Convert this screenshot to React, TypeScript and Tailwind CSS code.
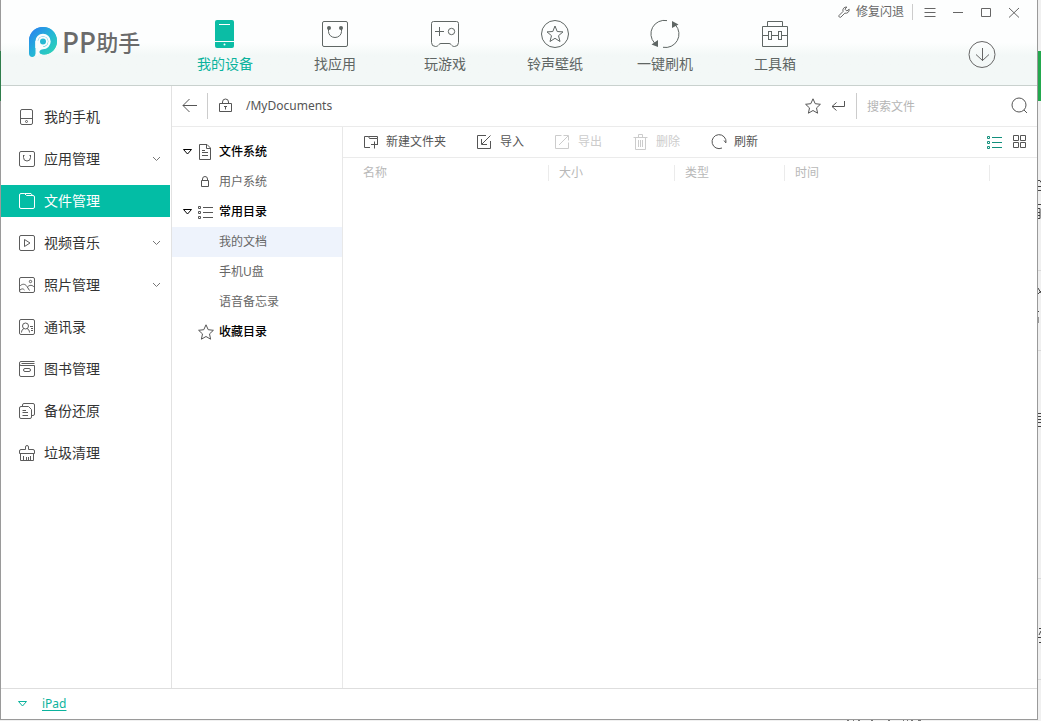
import type { ReactNode } from 'react';

type DrawProps = { w: number; h: number; children: ReactNode; className?: string };

function Draw({ w, h, children, className = '' }: DrawProps) {
  return (
    <svg
      width={w}
      height={h}
      viewBox={`0 0 ${w} ${h}`}
      fill="none"
      stroke="currentColor"
      strokeWidth="1"
      aria-hidden="true"
      className={`shrink-0 ${className}`}
    >
      {children}
    </svg>
  );
}

const star16 = 'M8 .8l2.2 4.9 5.2.6-3.9 3.6 1.1 5.3L8 12.5l-4.6 2.7 1.1-5.3L.6 6.3l5.2-.6z';

function Logo() {
  return (
    <svg width="30" height="32" viewBox="0 0 30 32" aria-hidden="true" className="shrink-0">
      <defs>
        <linearGradient id="logo-head" x1="0" y1="0" x2="1" y2="1">
          <stop offset="0.05" stopColor="#2b7ff0" />
          <stop offset="0.5" stopColor="#24b4d8" />
          <stop offset="1" stopColor="#2fd8b0" />
        </linearGradient>
      </defs>
      <path
        d="M1 15C1 7 7 1 15 1s14 6 14 14-6 13.500-13 13.500c-3 0-4.500-1-4.500-3s1.500-3.500 3.500-3.500c4.500 0 7.500-3 7.500-7s-3-7.500-7.500-7.500S7.500 11 7.500 15v12.500c0 2-1.500 3.500-3.300 3.500S1 29.500 1 27.500z"
        fill="url(#logo-head)"
      />
      <path d="M1 15C1 7 7 1 15 1s14 6 14 14-6 13.500-13 13.500c-3 0-4.500-1-4.500-3 0-2.500 1.500-3.500 3.500-3.500V15z" fill="url(#logo-head)" />
      <path d="M8.500 22v-6.500a6.500 6.500 0 1 1 6.500 6.500c-2 0-3.500.8-4.500 2.500-.8 1.500-.5 3-2 5" fill="none" stroke="#fbfdfd" strokeWidth="2.400" />
      <path d="M10 15.500a5 5 0 1 1 5 5c-2 0-4 .6-5 2.500z" fill="#fbfdfd" />
      <circle cx="15" cy="15.500" r="3" fill="#27b9d3" />
    </svg>
  );
}

const topNav: { label: string; icon: ReactNode; active?: boolean }[] = [
  {
    label: '我的设备',
    active: true,
    icon: (
      <Draw w={30} h={30}>
        <rect x="5" y="1" width="19" height="28" rx="2" fill="#0bbda5" stroke="none" />
        <path d="M9 5.500h11M5 22.500h19" stroke="#fff" />
        <circle cx="14.500" cy="25.500" r="1" fill="#fff" stroke="none" />
      </Draw>
    ),
  },
  {
    label: '找应用',
    icon: (
      <Draw w={30} h={30}>
        <rect x="2.500" y="2.500" width="25" height="25" rx="1.500" />
        <circle cx="9" cy="9" r="2" fill="currentColor" stroke="none" />
        <circle cx="21" cy="9" r="2" fill="currentColor" stroke="none" />
        <path d="M8.500 9v3.500a6.500 6 0 0 0 13 0V9" />
      </Draw>
    ),
  },
  {
    label: '玩游戏',
    icon: (
      <Draw w={30} h={30}>
        <path d="M3.500 2.500h23a2 2 0 0 1 2 2v19a4 4 0 0 1-4 4c-2 0-2.500-1-3.500-2-.5-.7-1-1-2-1h-8c-1 0-1.500.3-2 1-1 1-1.500 2-3.500 2a4 4 0 0 1-4-4v-19a2 2 0 0 1 2-2z" />
        <path d="M5 12.500h9M9.500 8v9" />
        <circle cx="21.500" cy="12.500" r="3.200" />
      </Draw>
    ),
  },
  {
    label: '铃声壁纸',
    icon: (
      <Draw w={30} h={30}>
        <circle cx="15" cy="15" r="13.500" />
        <path d="M15 7l2.200 5.500 5.800.4-4.500 3.800 1.500 5.800-5-3.200-5 3.200 1.500-5.800L7 12.900l5.800-.4z" />
      </Draw>
    ),
  },
  {
    label: '一键刷机',
    icon: (
      <Draw w={30} h={30}>
        <path d="M17 1.600A13.500 13.500 0 0 0 4.500 24M13 28.300A13.500 13.500 0 0 0 25.500 6" />
        <path d="M22 2l6.500 3.500L22 9zM8 21v7L1.500 25.500z" fill="currentColor" stroke="none" />
      </Draw>
    ),
  },
  {
    label: '工具箱',
    icon: (
      <Draw w={30} h={30}>
        <path d="M2.500 7.500h25v20h-25zM7.500 7.500v-5h15v5M2.500 16.500h6M11.500 16.500h7M21.500 16.500h6" />
        <rect x="8.500" y="12.500" width="3" height="8" />
        <rect x="18.500" y="12.500" width="3" height="8" />
      </Draw>
    ),
  },
];

const sideNav: { label: string; icon: ReactNode; active?: boolean; expandable?: boolean }[] = [
  {
    label: '我的手机',
    icon: (
      <Draw w={16} h={16}>
        <rect x="1.500" y=".5" width="12" height="15" rx="1.500" />
        <path d="M1.500 9.500h12" />
        <circle cx="7.500" cy="12.500" r="1" />
      </Draw>
    ),
  },
  {
    label: '应用管理',
    expandable: true,
    icon: (
      <Draw w={16} h={16}>
        <rect x=".5" y=".5" width="15" height="15" rx="1.500" />
        <path d="M4 4.500h1.500M10.500 4.500H12M4.500 4.500v2a3.500 3.500 0 0 0 7 0v-2" />
      </Draw>
    ),
  },
  {
    label: '文件管理',
    active: true,
    icon: (
      <Draw w={16} h={16}>
        <path d="M2 .5h3.500l2 2H14A1.500 1.500 0 0 1 15.500 4v10a1.500 1.500 0 0 1-1.500 1.500H2A1.500 1.500 0 0 1 .5 14V2A1.500 1.500 0 0 1 2 .5zM5.500.5H12l1.500 2" />
      </Draw>
    ),
  },
  {
    label: '视频音乐',
    expandable: true,
    icon: (
      <Draw w={16} h={16}>
        <rect x=".5" y=".5" width="15" height="15" rx="1.500" />
        <path d="M5.500 4.500v7l5.500-3.500z" />
      </Draw>
    ),
  },
  {
    label: '照片管理',
    expandable: true,
    icon: (
      <Draw w={16} h={16}>
        <rect x=".5" y=".5" width="15" height="15" rx="1.500" />
        <circle cx="11.500" cy="4.500" r="1.200" />
        <path d="M.5 9.500C3 6.500 6 6.500 8 9.500l2.500 4M8.500 10c2-2.300 5-2.300 7 .5M1 13c2-1.500 3-1.500 4.500 0" />
      </Draw>
    ),
  },
  {
    label: '通讯录',
    icon: (
      <Draw w={16} h={16}>
        <rect x=".5" y=".5" width="15" height="15" rx="1.500" />
        <circle cx="6.500" cy="7" r="3" />
        <path d="M2.500 13.500c0-2 1.200-3.500 2.500-4M8 9.500c1.300.5 2.500 2 2.500 4M11 7.500h3M12 9.500h2M12 11.500h2" />
      </Draw>
    ),
  },
  {
    label: '图书管理',
    icon: (
      <Draw w={16} h={16}>
        <path d="M15.500.5H2a1.500 1.500 0 0 0-1.500 1.500v12A1.500 1.500 0 0 0 2 15.500h12a1.500 1.500 0 0 0 1.500-1.500V4.500H2A1.500 1.500 0 0 1 .5 3M2.500 2.500h13" />
        <rect x="4.500" y="7.500" width="7" height="3" rx="1.500" />
      </Draw>
    ),
  },
  {
    label: '备份还原',
    icon: (
      <Draw w={16} h={16}>
        <path d="M2 3.500h7.500l3 3V14a1.500 1.500 0 0 1-1.500 1.500H2A1.500 1.500 0 0 1 .5 14V5A1.500 1.500 0 0 1 2 3.500zM3.500 3V2A1.500 1.500 0 0 1 5 .5h9A1.500 1.500 0 0 1 15.500 2v9a1.500 1.500 0 0 1-1.500 1.500h-1M3.500 7.500H7M3.500 9.500H9M3.500 12.500H9" />
      </Draw>
    ),
  },
  {
    label: '垃圾清理',
    icon: (
      <Draw w={16} h={16}>
        <path d="M6.500 4.500V2a1.500 1.500 0 0 1 3 0v2.500H14A1.500 1.500 0 0 1 15.500 6v2.500H.5V6A1.500 1.500 0 0 1 2 4.500zM1.500 8.500v7h13v-7M4.500 15v-4M7.500 15v-3M9.500 15v-3M11.500 15v-4" />
      </Draw>
    ),
  },
];

const listDots = (
  <Draw w={16} h={14}>
    <path d="M.5 1.500h2v2h-2zM.5 6.500h2v2h-2zM.5 11.500h2v2h-2zM5 2.500h10M5 7.500h10M5 12.500h10" />
  </Draw>
);

const tree: { label: string; icon?: ReactNode; head?: boolean; open?: boolean; active?: boolean }[] = [
  {
    label: '文件系统',
    head: true,
    open: true,
    icon: (
      <Draw w={16} h={16}>
        <path d="M1.500.5H9l3.500 3.500v11.500h-11zM8.500.5v4h4M4 6.500h3M4 8.500h6M4 11.500h6" />
      </Draw>
    ),
  },
  {
    label: '用户系统',
    icon: (
      <Draw w={16} h={12}>
        <path d="M3.500 4.500h7v6h-7zM4.500 4.500V3a2.500 2.500 0 0 1 5 0v1.500" />
      </Draw>
    ),
  },
  { label: '常用目录', head: true, open: true, icon: listDots },
  { label: '我的文档', active: true },
  { label: '手机U盘' },
  { label: '语音备忘录' },
  {
    label: '收藏目录',
    head: true,
    icon: (
      <Draw w={16} h={16}>
        <path d={star16} />
      </Draw>
    ),
  },
];

const actions: { label: string; icon: ReactNode; disabled?: boolean }[] = [
  {
    label: '新建文件夹',
    icon: (
      <Draw w={16} h={14}>
        <path d="M7 12.500H1.500v-11h4l1 2h8V9M5.500 1.500h9v2M11.500 6.500v7M8 9.500h7" />
      </Draw>
    ),
  },
  {
    label: '导入',
    icon: (
      <Draw w={16} h={14}>
        <path d="M9 .5H.5v13h13V6M13.500.5L5 9M4.500 4v5.500H10" />
      </Draw>
    ),
  },
  {
    label: '导出',
    disabled: true,
    icon: (
      <Draw w={16} h={14}>
        <path d="M6.500.5h-6v13h13V7.500M4 10L13 1M8.500.5h5v5" />
      </Draw>
    ),
  },
  {
    label: '删除',
    disabled: true,
    icon: (
      <Draw w={16} h={16}>
        <path d="M.5 3.500h14M5.500 3.500v-3h4v3M2.500 3.500v12h10v-12M5.500 6v7M7.500 6v7M9.500 6v7" />
      </Draw>
    ),
  },
  {
    label: '刷新',
    icon: (
      <Draw w={16} h={16}>
        <path d="M11 14A7 7 0 1 1 15 8.500M13 6.500l2 2.500" />
      </Draw>
    ),
  },
];

const columns = [
  { label: '名称', width: 'w-[206px]', pad: 'pl-5' },
  { label: '大小', width: 'w-[126px]', pad: 'pl-[10px]' },
  { label: '类型', width: 'w-[110px]', pad: 'pl-[10px]' },
  { label: '时间', width: 'w-[205px]', pad: 'pl-[10px]' },
];

function Header() {
  return (
    <header className="flex h-[86px] shrink-0 border-b border-[#c9d1ce] bg-linear-to-b from-[#fdfefe] from-50% via-[#f3f8f7] via-65% to-[#f3f8f7]">
      <div className="flex w-[169px] shrink-0 items-start gap-1 pt-[26px] pl-[27px] text-[#6b6b6b]">
        <Logo />
        <h1 className="flex h-8 items-center font-medium leading-8">
          <span className="text-[28px]">PP</span>
          <span className="text-[22px]">助手</span>
        </h1>
      </div>
      <nav className="flex" aria-label="主导航">
        {topNav.map((item) => (
          <a
            key={item.label}
            href="#"
            className={`flex w-[110px] flex-col items-center gap-1 pt-[19px] text-sm leading-[22px] ${
              item.active ? 'text-[#0bb39d]' : 'text-[#5f6664]'
            }`}
          >
            {item.icon}
            {item.label}
          </a>
        ))}
      </nav>
      <div className="ml-auto flex flex-col items-end text-[#666]">
        <div className="flex h-6 items-center pr-[17px]">
          <button className="flex items-center gap-[6px] pr-2 text-xs">
            <Draw w={12} h={12}>
              <path d="M1 9.500l4-4C4.300 3 6 .8 8.800 1L7 3.200 8.800 5 11.200 3.200c.3 2.800-2 4.500-4.400 4l-4 4C2 12 .3 10.500 1 9.500z" />
            </Draw>
            修复闪退
          </button>
          <span className="mr-[11px] h-4 w-px bg-[#ccc]" />
          <div className="flex items-center gap-4">
            <button aria-label="菜单">
              <Draw w={12} h={12}>
                <path d="M.5 2.500h11M.5 6.500h11M.5 10.500h11" />
              </Draw>
            </button>
            <button aria-label="最小化">
              <Draw w={12} h={12}>
                <path d="M1 6.500h10" />
              </Draw>
            </button>
            <button aria-label="最大化">
              <Draw w={12} h={12}>
                <path d="M1.500 2.500h9v8h-9z" />
              </Draw>
            </button>
            <button aria-label="关闭">
              <Draw w={12} h={12}>
                <path d="M1 2l10 9.500M11 2l-10 9.500" />
              </Draw>
            </button>
          </div>
        </div>
        <button aria-label="下载" className="mt-4 mr-[41px]">
          <Draw w={28} h={28}>
            <circle cx="14" cy="14.500" r="13" />
            <path d="M14.500 8v13M8 14.500l6.500 6 6.500-6" />
          </Draw>
        </button>
      </div>
    </header>
  );
}

function Sidebar() {
  return (
    <aside className="w-[171px] shrink-0 border-r border-[#e2e2e2] pt-[15px] pr-px">
      <nav className="flex flex-col gap-[10px]" aria-label="设备">
        {sideNav.map((item) => (
          <a
            key={item.label}
            href="#"
            className={`flex h-8 items-center pr-[9px] pl-[18px] text-sm ${
              item.active ? 'bg-[#03bda5] text-white' : 'text-[#333]'
            }`}
          >
            <span className={item.active ? 'text-white' : 'text-[#5c5c5c]'}>{item.icon}</span>
            <span className="ml-[9px] flex-1">{item.label}</span>
            {item.expandable && (
              <Draw w={9} h={6} className="text-[#777]">
                <path d="M1 1l3.500 3.500L8 1" />
              </Draw>
            )}
          </a>
        ))}
      </nav>
    </aside>
  );
}

function PathBar() {
  return (
    <div className="flex h-[41px] shrink-0 items-center border-b border-[#ebebeb] text-[#555]">
      <button aria-label="返回" className="px-[10px]">
        <Draw w={15} h={14}>
          <path d="M1 6.500h14M7.500 0L1 6.500 7.500 13" />
        </Draw>
      </button>
      <span className="h-[26px] w-px bg-[#ccc]" />
      <Draw w={14} h={16} className="mx-[11px]">
        <path d="M.5 5.500h12v8H.5zM3.500 5.500V4a3 3 0 0 1 6 0v1.500M5 8.500h3M6.500 8.500v3" />
      </Draw>
      <span className="ml-[2px] flex-1 text-xs">/MyDocuments</span>
      <button aria-label="收藏">
        <Draw w={16} h={16}>
          <path d={star16} />
        </Draw>
      </button>
      <button aria-label="转到" className="mx-[10px]">
        <Draw w={15} h={14}>
          <path d="M13.500 2v5.500H1M5.500 3.500l-4.500 4 4.500 4" />
        </Draw>
      </button>
      <span className="h-[26px] w-px bg-[#ccc]" />
      <input
        type="text"
        aria-label="搜索文件"
        placeholder="搜索文件"
        className="h-6 w-[154px] pl-[10px] text-xs outline-none placeholder:text-[#b5b5b5]"
      />
      <button aria-label="搜索" className="mr-2">
        <Draw w={18} h={18}>
          <circle cx="8" cy="8" r="7" />
          <path d="M13 13l3 3" />
        </Draw>
      </button>
    </div>
  );
}

function Tree() {
  return (
    <nav className="w-[171px] shrink-0 border-r border-[#e8e8e8] pt-[10px] text-xs" aria-label="目录">
      {tree.map((node) => (
        <a
          key={node.label}
          href="#"
          className={`flex h-[30px] items-center pl-[11px] ${node.active ? 'bg-[#eef3fc]' : ''} ${
            node.head ? 'font-medium text-black' : 'text-[#666]'
          }`}
        >
          <span className="w-[15px]">
            {node.open && (
              <Draw w={9} h={6}>
                <path d="M.5.500h8L4.500 5z" />
              </Draw>
            )}
          </span>
          <span className="mr-[5px] w-4 text-[#555]">{node.icon}</span>
          {node.label}
        </a>
      ))}
    </nav>
  );
}

function Files() {
  return (
    <section className="min-w-0 flex-1">
      <div className="flex h-[31px] items-center gap-[31px] border-b border-[#ebebeb] pr-[10px] pl-5 text-xs text-[#555]">
        {actions.map((a) => (
          <button
            key={a.label}
            disabled={a.disabled}
            className="flex items-center gap-[7px] whitespace-nowrap disabled:text-[#ccc]"
          >
            {a.icon}
            {a.label}
          </button>
        ))}
        <div className="ml-auto flex items-center gap-[10px]">
          <button aria-label="列表视图" className="text-[#128f7c]">
            {listDots}
          </button>
          <button aria-label="网格视图">
            <Draw w={14} h={14}>
              <path d="M.5.500h5v5h-5zM7.500.500h5v5h-5zM.5 7.500h5v5h-5zM7.500 7.500h5v5h-5z" />
            </Draw>
          </button>
        </div>
      </div>
      <table className="w-full table-fixed text-left text-xs text-[#b8b8b8]">
        <thead>
          <tr>
            {columns.map((c) => (
              <th key={c.label} className={`h-[30px] p-0 font-normal ${c.width}`}>
                <div className={`h-4 border-r border-[#ebebeb] leading-4 ${c.pad}`}>{c.label}</div>
              </th>
            ))}
            <td />
          </tr>
        </thead>
      </table>
    </section>
  );
}

export default function App() {
  return (
    <div className="flex min-h-screen flex-col bg-[#f0f0f0] font-['Noto_Sans','Noto_Sans_CJK_SC',sans-serif]">
      <div className="flex flex-1">
        <div className="w-px bg-[#9a9a9a] pt-[51px]">
          <div className="h-[50px] bg-[#2f7d4b]" />
        </div>
        <main className="flex min-w-0 flex-1 flex-col border-r border-b border-[#9a9a9a] bg-white">
          <Header />
          <div className="flex flex-1">
            <Sidebar />
            <div className="flex min-w-0 flex-1 flex-col">
              <PathBar />
              <div className="flex flex-1">
                <Tree />
                <Files />
              </div>
            </div>
          </div>
          <footer className="flex h-[31px] shrink-0 items-center gap-[15px] border-t border-[#dedede] pl-[17px] text-xs text-[#0bb39d]">
            <Draw w={9} h={6}>
              <path d="M.5.500h8L4.500 5z" />
            </Draw>
            <a href="#" className="underline underline-offset-2">
              iPad
            </a>
          </footer>
        </main>
        <div className="w-[3px] pt-[51px]">
          <div className="h-[50px] bg-[#23a84e]" />
          <svg width="3" height="600" viewBox="0 0 3 600" fill="none" stroke="#444" aria-hidden="true">
            <path d="M0 79.500h2l1 2M0 85.500h3M0 89.500h3M0 103.500h3M0 107.500h2v10H0M0 111.500h2M0 114.500h2" />
            <path d="M0 187l3 5M0 193l3-3M0 210.500h1M0 216v6M0 312.500h3M0 315.500h3M0 318.500h3M0 321.500h3M0 325.500h3" />
            <path d="M1 527.500h2M0 536.500h3M1 541.500h2M3 530l-2 4" />
            <path d="M0 169.500h3M0 249.500h3M0 477.500h3M0 578.500h3" stroke="#d8d8d8" />
          </svg>
        </div>
      </div>
      <svg width="1041" height="1" viewBox="0 0 1041 1" className="max-w-full" aria-hidden="true">
        <path d="M847 .5h2M853 .5h1M858 .5h2M871 .5h2M888 .5h2M903 .5h1M907 .5h1M911 .5h2M918 .5h3" stroke="#777" />
      </svg>
    </div>
  );
}
